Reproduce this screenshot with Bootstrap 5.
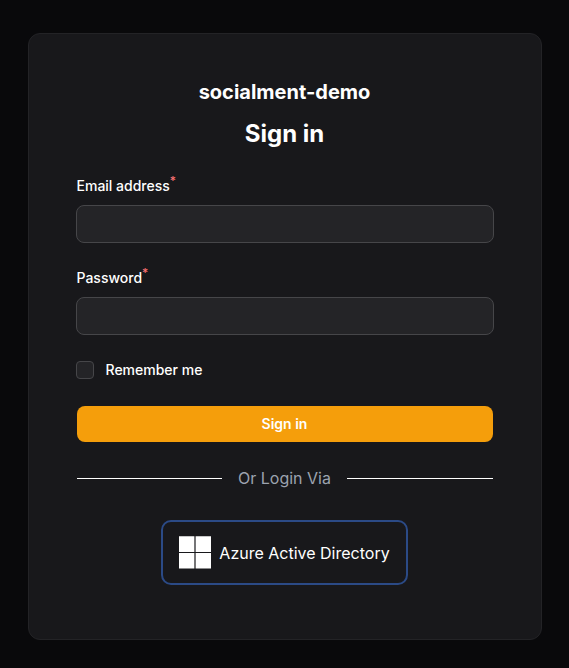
<!DOCTYPE html>
<html lang="en" data-bs-theme="dark">
<head>
<meta charset="utf-8">
<meta name="viewport" content="width=device-width, initial-scale=1">
<title>Sign in - socialment-demo</title>
<link href="https://cdn.jsdelivr.net/npm/bootstrap@5.3.0/dist/css/bootstrap.min.css" rel="stylesheet">
<style>
body { background: #09090b; color: #fff; font-family: Inter, "Liberation Sans", sans-serif; line-height: 24px; }
.login-page { padding: 20px 24px 15px; }
.login-panel { max-width: 514px; padding: 48px; background: #18181b; border: 1px solid #232326; border-radius: 12px; }
.brand { font-size: 20px; line-height: 20px; }
.login-title { font-size: 24px; line-height: 32px; }
.field-label { font-size: 14px; line-height: 24px; font-weight: 500; }
.field-label sup { color: #f87171; font-size: 12px; }
.login-panel .form-control { height: 38px; margin: -1px; width: calc(100% + 2px); background: #242427; border-color: #464649; border-radius: 8px; }
.login-panel .form-check-input { width: 18px; height: 18px; margin: 0 0 0 -1px; background-color: #242427; border-color: #464649; border-radius: 4px; }
.btn-amber { --bs-btn-bg: #f59e0b; --bs-btn-color: #fff; --bs-btn-hover-bg: #fbbf24; --bs-btn-hover-color: #fff; --bs-btn-active-bg: #d97706; --bs-btn-active-color: #fff; height: 36px; border: 0; border-radius: 8px; font-size: 14px; line-height: 20px; font-weight: 600; }
.rule { height: 1px; background: #fff; }
.muted-label { color: #9ca3af; }
.providers { padding: 6px 0; }
.btn-provider { --bs-btn-color: #fff; --bs-btn-hover-color: #fff; --bs-btn-hover-border-color: #3b82f6; border: 2px solid #2b4a86; border-radius: 10px; padding: 14px 16px; line-height: 24px; }
</style>
</head>
<body>
<div class="login-page min-vh-100 d-flex align-items-center justify-content-center">
  <main class="login-panel w-100 d-flex flex-column gap-4">
    <header class="text-center">
      <div class="brand fw-bold mb-3">socialment-demo</div>
      <h1 class="login-title fw-bold mb-0">Sign in</h1>
    </header>
    <form class="d-flex flex-column gap-4">
      <div class="d-flex flex-column gap-2">
        <label class="field-label" for="email">Email address<sup>*</sup></label>
        <input class="form-control" type="email" id="email" required>
      </div>
      <div class="d-flex flex-column gap-2">
        <label class="field-label" for="password">Password<sup>*</sup></label>
        <input class="form-control" type="password" id="password" required>
      </div>
      <div class="d-flex align-items-center">
        <input class="form-check-input" type="checkbox" id="remember">
        <label class="field-label ps-2 ms-1" for="remember">Remember me</label>
      </div>
      <button class="btn btn-amber w-100" type="submit">Sign in</button>
    </form>
    <div class="d-flex align-items-center gap-3">
      <div class="rule flex-fill"></div>
      <span class="muted-label">Or Login Via</span>
      <div class="rule flex-fill"></div>
    </div>
    <div class="providers d-flex justify-content-center">
      <a class="btn btn-provider d-inline-flex align-items-center gap-2" href="#">
        <svg width="32" height="33" viewBox="0 0 32 33" fill="#fff" aria-hidden="true"><path d="M0 .3h15.4v15.6H0zM16.6.3H32v15.6H16.6zM0 17h15.4v15.6H0zM16.6 17H32v15.6H16.6z"/></svg>
        <span>Azure Active Directory</span>
      </a>
    </div>
  </main>
</div>
<script src="https://cdn.jsdelivr.net/npm/bootstrap@5.3.0/dist/js/bootstrap.bundle.min.js"></script>
</body>
</html>
